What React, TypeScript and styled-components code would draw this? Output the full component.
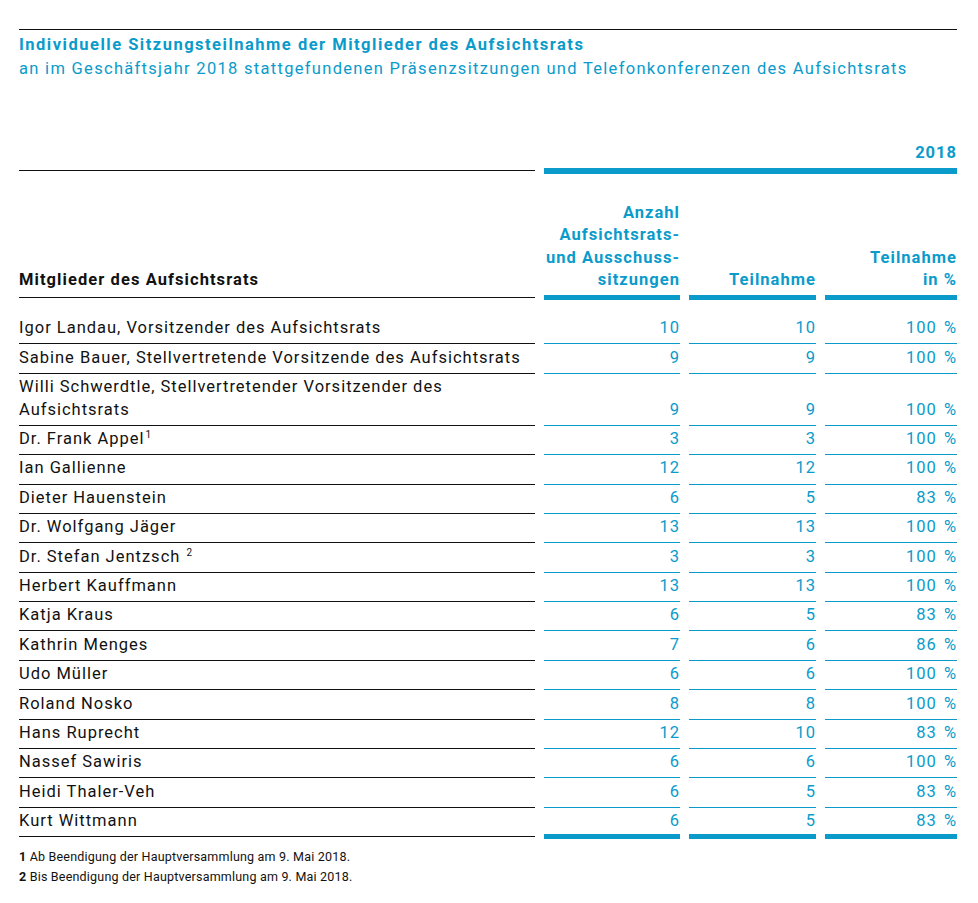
import React from "react";
import styled, { createGlobalStyle } from "styled-components";

const BLUE = "#0a9bcb";
const INK = "#111111";

const GlobalStyle = createGlobalStyle`
  html, body { margin: 0; padding: 0; background: #ffffff; }
  body { font-family: Roboto, "Liberation Sans", sans-serif; color: ${INK}; }
`;

const Page = styled.div`
  width: 938px;
  padding: 29px 0 0 19px;
`;

const TopRule = styled.div`
  height: 1px;
  background: ${INK};
`;

const Title = styled.div`
  margin-top: 3px;
  font-size: 16.5px;
  line-height: 23.5px;
  font-weight: 700;
  color: ${BLUE};
  letter-spacing: 1.5px;
  white-space: nowrap;
`;

const Subtitle = styled.div`
  font-size: 16.5px;
  line-height: 23.5px;
  font-weight: 400;
  color: ${BLUE};
  letter-spacing: 1.3px;
  white-space: nowrap;
`;

const Row = styled.div<{ $top?: number }>`
  display: grid;
  grid-template-columns: 516px 136px 127px 132px;
  column-gap: 9px;
  align-items: end;
  margin-top: ${(p) => p.$top ?? 0}px;
`;

const NameCell = styled.div<{ $bold?: boolean; $last?: boolean }>`
  font-size: 16.5px;
  line-height: 22.6px;
  letter-spacing: ${(p) => (p.$bold ? 1.07 : 0.99)}px;
  font-weight: ${(p) => (p.$bold ? 700 : 400)};
  padding: ${(p) => (p.$bold ? "0 0 5px" : "2.3px 0 3.5px")};
  border-bottom: 1px solid ${INK};
  margin-bottom: ${(p) => (p.$bold || p.$last ? 2 : 0)}px;
  white-space: nowrap;
`;

const SpacerCell = styled.div`
  border-bottom: 1px solid ${INK};
  margin-bottom: 2.5px;
`;

const YearCell = styled.div`
  grid-column: 2 / 5;
  text-align: right;
  font-size: 16.5px;
  line-height: 22.6px;
  font-weight: 700;
  color: ${BLUE};
  letter-spacing: 1px;
  padding-bottom: 3px;
  border-bottom: 6px solid ${BLUE};
`;

const HeadCell = styled.div`
  text-align: right;
  font-size: 16.5px;
  line-height: 22.6px;
  font-weight: 700;
  color: ${BLUE};
  letter-spacing: 1.03px;
  padding-bottom: 3px;
  border-bottom: 5px solid ${BLUE};
  white-space: nowrap;
`;

const NumCell = styled.div<{ $last?: boolean }>`
  text-align: right;
  font-size: 16.5px;
  line-height: 22.6px;
  color: ${BLUE};
  letter-spacing: 1px;
  word-spacing: 2px;
  padding: ${(p) => (p.$last ? "2.3px 0 1.5px" : "2.3px 0 3.5px")};
  border-bottom: ${(p) => (p.$last ? "5px" : "1px")} solid ${BLUE};
`;

const Body = styled.div`
  margin-top: 15px;
`;

const Sup = styled.sup`
  font-size: 10px;
  line-height: 0;
  vertical-align: 0;
  position: relative;
  top: -6px;
  margin-left: 1px;
`;

const Notes = styled.div`
  margin-top: 8px;
  font-size: 12.5px;
  line-height: 20px;
  letter-spacing: 0.2px;
  color: ${INK};
`;

const NoteNum = styled.b`
  font-weight: 700;
`;

type Member = { name: React.ReactNode; a: number; t: number; p: number };

const members: Member[] = [
  { name: "Igor Landau, Vorsitzender des Aufsichtsrats", a: 10, t: 10, p: 100 },
  { name: "Sabine Bauer, Stellvertretende Vorsitzende des Aufsichtsrats", a: 9, t: 9, p: 100 },
  {
    name: (
      <>
        Willi Schwerdtle, Stellvertretender Vorsitzender des
        <br />
        Aufsichtsrats
      </>
    ),
    a: 9,
    t: 9,
    p: 100,
  },
  { name: <>Dr. Frank Appel<Sup>1</Sup></>, a: 3, t: 3, p: 100 },
  { name: "Ian Gallienne", a: 12, t: 12, p: 100 },
  { name: "Dieter Hauenstein", a: 6, t: 5, p: 83 },
  { name: "Dr. Wolfgang Jäger", a: 13, t: 13, p: 100 },
  { name: <>Dr. Stefan Jentzsch <Sup>2</Sup></>, a: 3, t: 3, p: 100 },
  { name: "Herbert Kauffmann", a: 13, t: 13, p: 100 },
  { name: "Katja Kraus", a: 6, t: 5, p: 83 },
  { name: "Kathrin Menges", a: 7, t: 6, p: 86 },
  { name: "Udo Müller", a: 6, t: 6, p: 100 },
  { name: "Roland Nosko", a: 8, t: 8, p: 100 },
  { name: "Hans Ruprecht", a: 12, t: 10, p: 83 },
  { name: "Nassef Sawiris", a: 6, t: 6, p: 100 },
  { name: "Heidi Thaler-Veh", a: 6, t: 5, p: 83 },
  { name: "Kurt Wittmann", a: 6, t: 5, p: 83 },
];

export default function App() {
  return (
    <>
      <GlobalStyle />
      <Page>
        <TopRule />
        <Title>Individuelle Sitzungsteilnahme der Mitglieder des Aufsichtsrats</Title>
        <Subtitle>
          an im Geschäftsjahr 2018 stattgefundenen Präsenzsitzungen und Telefonkonferenzen des Aufsichtsrats
        </Subtitle>

        <Row $top={62}>
          <SpacerCell />
          <YearCell>2018</YearCell>
        </Row>

        <Row $top={28}>
          <NameCell $bold>Mitglieder des Aufsichtsrats</NameCell>
          <HeadCell>
            Anzahl
            <br />
            Aufsichtsrats-
            <br />
            und Ausschuss-
            <br />
            sitzungen
          </HeadCell>
          <HeadCell>Teilnahme</HeadCell>
          <HeadCell>
            Teilnahme
            <br />
            in %
          </HeadCell>
        </Row>

        <Body>
          {members.map((m, i) => {
            const last = i === members.length - 1;
            return (
              <Row key={i}>
                <NameCell $last={last}>{m.name}</NameCell>
                <NumCell $last={last}>{m.a}</NumCell>
                <NumCell $last={last}>{m.t}</NumCell>
                <NumCell $last={last}>{m.p} %</NumCell>
              </Row>
            );
          })}
        </Body>

        <Notes>
          <div>
            <NoteNum>1</NoteNum> Ab Beendigung der Hauptversammlung am 9. Mai 2018.
          </div>
          <div>
            <NoteNum>2</NoteNum> Bis Beendigung der Hauptversammlung am 9. Mai 2018.
          </div>
        </Notes>
      </Page>
    </>
  );
}
